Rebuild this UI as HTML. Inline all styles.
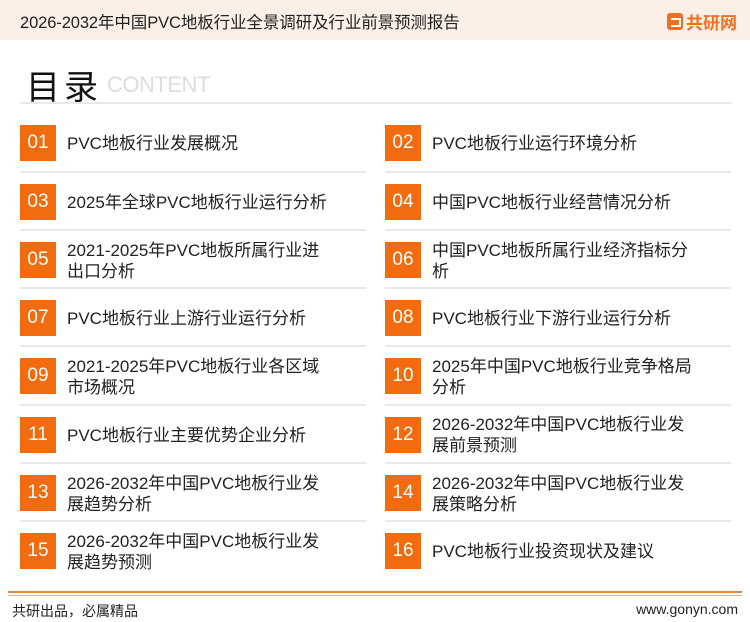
<!DOCTYPE html>
<html><head><meta charset="utf-8"><style>
*{margin:0;padding:0;box-sizing:border-box}
body{width:750px;height:622px;background:#fff;position:relative;overflow:hidden;font-family:"Liberation Sans","Noto Sans CJK SC",sans-serif;color:#222}
.hdr{position:absolute;left:0;top:0;width:750px;height:40px;background:#fcefe8}
.hdr .t{position:absolute;left:20px;top:9px;font-size:16.5px;color:#222;letter-spacing:-0.1px}
.logo{position:absolute;left:667px;top:9px;font-size:17px;font-weight:bold;color:#f07020;display:flex;align-items:center}
.logo i{display:inline-block;width:16px;height:17px;background:#f07020;border-radius:3px;margin-right:3px;position:relative}
.logo i:after{content:"";position:absolute;left:4px;top:5px;width:8px;height:5px;border:2px solid #fff;border-left:none}
.mt{position:absolute;left:26px;top:60px;font-size:34px;color:#111;letter-spacing:4px}
.ct{position:absolute;left:107px;top:72px;font-size:22px;color:#ddd;letter-spacing:-0.5px}
.ln{position:absolute;left:20px;top:102px;width:712px;height:2px;background:#e8e8e8}
.b{position:absolute;width:36px;height:36px;background:#f26b0f;color:#fff;font-size:19px;text-align:center;line-height:36px}
.x{position:absolute;font-size:17px;line-height:21px;color:#222}
.s{position:absolute;height:2px;background:#e8e8e8}
.f1{position:absolute;left:8px;top:591px;width:734px;height:2px;background:#d98a50}
.f2{position:absolute;left:8px;top:595px;width:734px;height:1px;background:#e8b48c}
.fl{position:absolute;left:12px;top:601px;font-size:14px}
.fr{position:absolute;right:12px;top:601px;font-size:14px}
</style></head><body>
<div class="hdr"><div class="t">2026-2032年中国PVC地板行业全景调研及行业前景预测报告</div><div class="logo"><i></i>共研网</div></div>
<div class="mt">目录</div><div class="ct">CONTENT</div>
<div class="ln"></div>

<div class="b" style="left:20px;top:125px">01</div><div class="x" style="left:67px;top:133px">PVC地板行业发展概况</div>
<div class="b" style="left:385px;top:125px">02</div><div class="x" style="left:432px;top:133px">PVC地板行业运行环境分析</div>
<div class="s" style="left:20px;top:171px;width:346px"></div><div class="s" style="left:385px;top:171px;width:346px"></div>

<div class="b" style="left:20px;top:184px">03</div><div class="x" style="left:67px;top:192px">2025年全球PVC地板行业运行分析</div>
<div class="b" style="left:385px;top:184px">04</div><div class="x" style="left:432px;top:192px">中国PVC地板行业经营情况分析</div>
<div class="s" style="left:20px;top:229px;width:346px"></div><div class="s" style="left:385px;top:229px;width:346px"></div>

<div class="b" style="left:20px;top:242px">05</div><div class="x" style="left:67px;top:240px">2021-2025年PVC地板所属行业进<br>出口分析</div>
<div class="b" style="left:385px;top:242px">06</div><div class="x" style="left:432px;top:240px">中国PVC地板所属行业经济指标分<br>析</div>
<div class="s" style="left:20px;top:287px;width:346px"></div><div class="s" style="left:385px;top:287px;width:346px"></div>

<div class="b" style="left:20px;top:300px">07</div><div class="x" style="left:67px;top:308px">PVC地板行业上游行业运行分析</div>
<div class="b" style="left:385px;top:300px">08</div><div class="x" style="left:432px;top:308px">PVC地板行业下游行业运行分析</div>
<div class="s" style="left:20px;top:345px;width:346px"></div><div class="s" style="left:385px;top:345px;width:346px"></div>

<div class="b" style="left:20px;top:358px">09</div><div class="x" style="left:67px;top:356px">2021-2025年PVC地板行业各区域<br>市场概况</div>
<div class="b" style="left:385px;top:358px">10</div><div class="x" style="left:432px;top:356px">2025年中国PVC地板行业竞争格局<br>分析</div>
<div class="s" style="left:20px;top:404px;width:346px"></div><div class="s" style="left:385px;top:404px;width:346px"></div>

<div class="b" style="left:20px;top:417px">11</div><div class="x" style="left:67px;top:425px">PVC地板行业主要优势企业分析</div>
<div class="b" style="left:385px;top:417px">12</div><div class="x" style="left:432px;top:414px">2026-2032年中国PVC地板行业发<br>展前景预测</div>
<div class="s" style="left:20px;top:462px;width:346px"></div><div class="s" style="left:385px;top:462px;width:346px"></div>

<div class="b" style="left:20px;top:475px">13</div><div class="x" style="left:67px;top:473px">2026-2032年中国PVC地板行业发<br>展趋势分析</div>
<div class="b" style="left:385px;top:475px">14</div><div class="x" style="left:432px;top:473px">2026-2032年中国PVC地板行业发<br>展策略分析</div>
<div class="s" style="left:20px;top:520px;width:346px"></div><div class="s" style="left:385px;top:520px;width:346px"></div>

<div class="b" style="left:20px;top:533px">15</div><div class="x" style="left:67px;top:531px">2026-2032年中国PVC地板行业发<br>展趋势预测</div>
<div class="b" style="left:385px;top:533px">16</div><div class="x" style="left:432px;top:541px">PVC地板行业投资现状及建议</div>

<div class="f1"></div><div class="f2"></div>
<div class="fl">共研出品，必属精品</div><div class="fr">www.gonyn.com</div>
</body></html>
